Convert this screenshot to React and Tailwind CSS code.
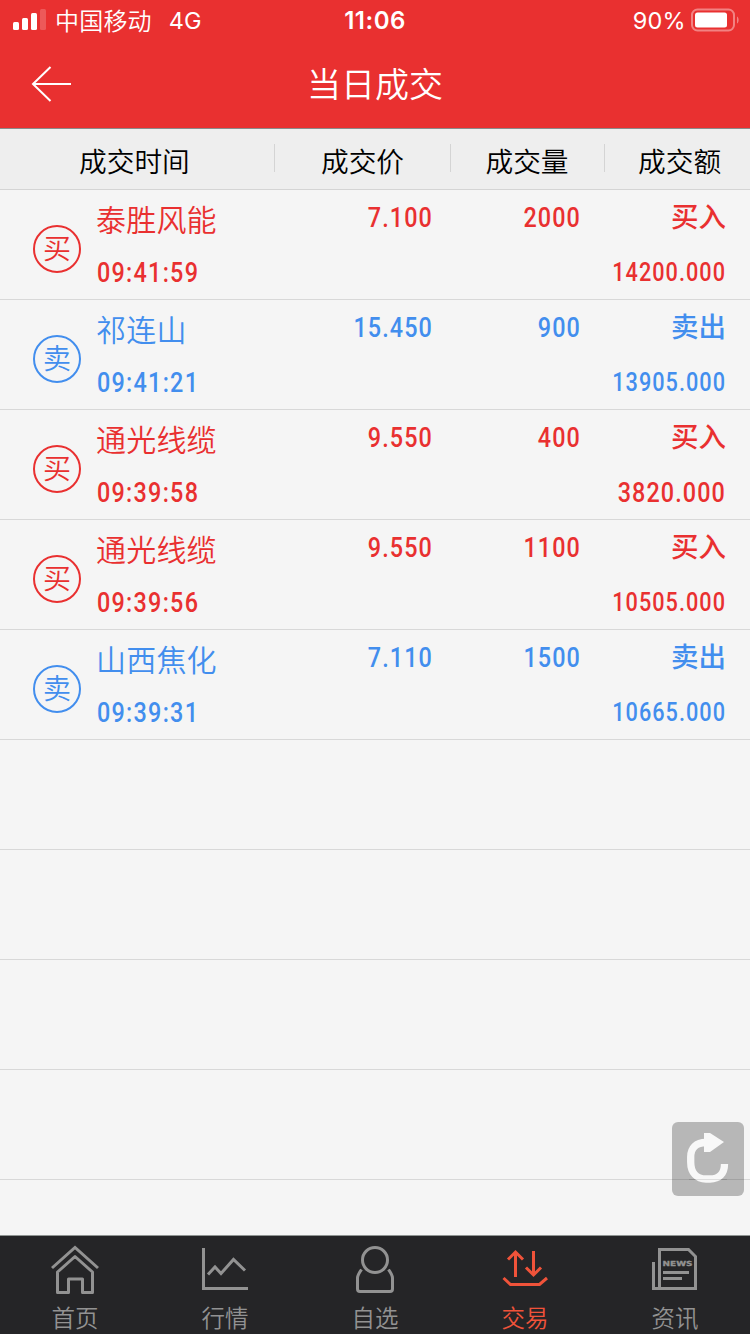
import React from "react";

const trades = [
  { side: "buy", name: "泰胜风能", time: "09:41:59", price: "7.100", volume: "2000", amount: "14200.000" },
  { side: "sell", name: "祁连山", time: "09:41:21", price: "15.450", volume: "900", amount: "13905.000" },
  { side: "buy", name: "通光线缆", time: "09:39:58", price: "9.550", volume: "400", amount: "3820.000" },
  { side: "buy", name: "通光线缆", time: "09:39:56", price: "9.550", volume: "1100", amount: "10505.000" },
  { side: "sell", name: "山西焦化", time: "09:39:31", price: "7.110", volume: "1500", amount: "10665.000" },
];

const emptyRows = [0, 1, 2, 3];

function StatusBar() {
  return (
    <div className="relative flex h-10 items-center justify-between pl-[13px] pr-[11px] font-['Inter','Noto_Sans_CJK_SC',sans-serif] text-white">
      <div className="flex h-10 items-center">
        <svg width="33" height="22" viewBox="0 0 33 22" fill="currentColor" className="mt-[-2px]">
          <rect x="0" y="14" width="6" height="8" rx="1.5" />
          <rect x="9" y="10" width="6" height="12" rx="1.5" />
          <rect x="18" y="5" width="6" height="17" rx="1.5" />
          <rect x="27" y="1" width="6" height="21" rx="1.5" opacity="0.2" />
        </svg>
        <span className="ml-[9px] pt-[3px] text-[24px] font-[350] leading-10 tracking-[0.2px]">中国移动</span>
        <span className="ml-[17px] pt-[2px] text-[23.500px] leading-10">4G</span>
      </div>
      <span className="absolute left-1/2 top-0 -translate-x-1/2 text-[24px] font-semibold leading-[42px] tracking-[0.5px]">11:06</span>
      <div className="flex h-10 items-center">
        <span className="pt-[2px] text-[23.500px] leading-10 tracking-[0.3px]">90%</span>
        <svg width="49" height="24" viewBox="0 0 49 24" className="ml-[4px] mt-[-1px]">
          <rect x="2" y="1.5" width="42" height="21" rx="5.5" fill="none" stroke="#fff" strokeOpacity="0.4" strokeWidth="2" />
          <rect x="5" y="4.500" width="32" height="15" rx="2.5" fill="#fff" />
          <path d="M47 8.500c2.200 1.200 2.200 5.800 0 7z" fill="#fff" fillOpacity="0.4" />
        </svg>
      </div>
    </div>
  );
}

function Header() {
  return (
    <header className="h-[129px] border-b border-[#8a8a8a] bg-[#e93030]">
      <StatusBar />
      <div className="grid h-[88px] grid-cols-[100px_1fr_100px] items-center text-white">
        <button type="button" aria-label="返回" className="pl-[31px]">
          <svg width="41" height="36" viewBox="0 0 41 36" fill="none" stroke="currentColor" strokeWidth="2">
            <path d="M40 18H2M19.500 1L2 18l17.500 17" />
          </svg>
        </button>
        <h1 className="pb-[2px] text-center text-[34px] font-[350] leading-[84px]">当日成交</h1>
      </div>
    </header>
  );
}

function TableHead() {
  return (
    <div className="flex h-[61px] border-b border-[#d4d4d4] bg-[#eeeeee] pt-[15px] text-[27.700px] font-[350] leading-[32px] text-black">
      <div className="h-7 w-[275px] border-r border-[#d4d4d4] pl-[79px]">成交时间</div>
      <div className="h-7 w-[176px] border-r border-[#d4d4d4] text-center">成交价</div>
      <div className="h-7 w-[154px] border-r border-[#d4d4d4] pr-px text-center">成交量</div>
      <div className="h-7 flex-1 pl-[33px]">成交额</div>
    </div>
  );
}

function TradeRow({ trade }) {
  const buy = trade.side === "buy";
  // long amounts get a smaller size so that they fit the column
  const amountSize = trade.amount.length > 8 ? "text-[25.500px] tracking-[1.200px]" : "text-[27.500px] tracking-[1.300px]";
  return (
    <div className={`flex h-[110px] border-b border-[#d8d8d8] ${buy ? "text-[#e93030]" : "text-[#428eee]"}`}>
      <div className="w-[97px] pl-[33px] pt-[35px]">
        <div className="h-12 w-12 rounded-full border-2 border-current text-center text-[28px] font-[350] leading-[41px]">
          {buy ? "买" : "卖"}
        </div>
      </div>
      <div className="w-[178px]">
        <div className="ml-[-1px] h-[60px] text-[30px] font-[350] leading-[57px] tracking-[0.2px]">{trade.name}</div>
        <div className="origin-left scale-x-[0.85] whitespace-nowrap font-['Roboto',sans-serif] text-[27.500px] font-medium leading-[46px] tracking-[1.500px]">
          {trade.time}
        </div>
      </div>
      <div className="w-[158px] origin-right scale-x-[0.85] text-right font-['Roboto',sans-serif] text-[27.500px] font-medium leading-[56px] tracking-[1.300px]">
        {trade.price}
      </div>
      <div className="w-[148px] origin-right scale-x-[0.85] text-right font-['Roboto',sans-serif] text-[27.500px] font-medium leading-[56px] tracking-[1.300px]">
        {trade.volume}
      </div>
      <div className="w-[145px] text-right">
        <div className="h-[60px] text-[27.500px] font-medium leading-[51px]">{buy ? "买入" : "卖出"}</div>
        <div className={`origin-right scale-x-[0.85] whitespace-nowrap font-['Roboto',sans-serif] font-medium leading-[45px] ${amountSize}`}>
          {trade.amount}
        </div>
      </div>
    </div>
  );
}

function HomeIcon() {
  return (
    <svg width="50" height="50" viewBox="0 0 50 50" fill="none" stroke="currentColor" strokeWidth="3">
      <path d="M2 23L25 2.500 48 23" />
      <path d="M7.500 47.500V27L25 11.500 42.500 27v20.500H32.500V34h-14v13.500z" strokeLinejoin="round" />
    </svg>
  );
}

function ChartIcon() {
  return (
    <svg width="50" height="50" viewBox="0 0 50 50" fill="none" stroke="currentColor" strokeWidth="3">
      <path d="M3.500 3v40.500H48M8 29.500l7-7.500 6 6.500L33.500 14.500 45 25.500" />
    </svg>
  );
}

function UserIcon() {
  return (
    <svg width="50" height="50" viewBox="0 0 50 50" fill="none" stroke="currentColor" strokeWidth="3">
      <circle cx="25" cy="15" r="12.500" />
      <path d="M11.500 24.500C9 28 7.500 30 7.500 33v11q0 2.500 2.500 2.500h30q2.500 0 2.500-2.500V33c0-3-1.500-5-4-8.500" />
    </svg>
  );
}

function TradeIcon() {
  return (
    <svg width="50" height="50" viewBox="0 0 50 50" fill="none" stroke="currentColor" strokeWidth="3">
      <path d="M15.500 32V8M8 14.500L15.500 7l7.500 7.500M33.500 6v24M26 22.500l7.500 7.500 7.500-7.500" />
      <path d="M3.500 33l7 6.500h29l7.500-6.500" />
    </svg>
  );
}

function NewsIcon() {
  return (
    <svg width="50" height="50" viewBox="0 0 50 50" fill="none" stroke="currentColor" strokeWidth="3">
      <path d="M9.500 43V4.500H38.500L45.500 11.500v32H3.500V17" />
      <path d="M13 27.500h26M13 33.500h19" />
      <text x="12.500" y="21" fill="currentColor" stroke="currentColor" strokeWidth="0.3" fontSize="7" fontWeight="700" fontFamily="DejaVu Sans" textLength="30" lengthAdjust="spacingAndGlyphs">
        NEWS
      </text>
    </svg>
  );
}

const tabs = [
  { label: "首页", icon: HomeIcon },
  { label: "行情", icon: ChartIcon },
  { label: "自选", icon: UserIcon },
  { label: "交易", icon: TradeIcon, active: true },
  { label: "资讯", icon: NewsIcon },
];

function TabBar() {
  return (
    <nav className="grid h-[99px] grid-cols-5 border-t border-[#8f9492] bg-[#252527]">
      {tabs.map(({ label, icon: Icon, active }) => (
        <div key={label} className={`flex flex-col items-center pt-[9px] ${active ? "text-[#f0533a]" : "text-[#929292]"}`}>
          <Icon />
          <span className="text-[23.500px] font-[350] leading-[44px]">{label}</span>
        </div>
      ))}
    </nav>
  );
}

export default function App() {
  return (
    <div className="relative flex h-[1334px] w-[750px] flex-col overflow-hidden bg-[#f5f5f5] font-['Noto_Sans_CJK_SC',sans-serif]">
      <Header />
      <TableHead />
      <main className="flex-1 overflow-hidden">
        {trades.map((trade) => (
          <TradeRow key={trade.time} trade={trade} />
        ))}
        {emptyRows.map((i) => (
          <div key={i} className="h-[110px] border-b border-[#d8d8d8]" />
        ))}
      </main>
      <TabBar />
      <button type="button" aria-label="刷新" className="absolute left-[672px] top-[1122px] h-[74px] w-[72px] rounded-[6px] bg-black/25">
        <svg width="72" height="74" viewBox="0 0 72 74" fill="none">
          <path d="M34 20.500C24 20.500 18.700 26 18.700 35v5C18.700 51 25 57 34 57h4c9 0 14.500-5 14.500-15" stroke="#f8f8f8" strokeWidth="7.300" />
          <path d="M32 11h6l14 9-14 10h-6z" fill="#f8f8f8" />
          {/* row divider showing through the arrow */}
          <path d="M17 57.500h38" stroke="#000" strokeOpacity="0.1" />
        </svg>
      </button>
    </div>
  );
}
